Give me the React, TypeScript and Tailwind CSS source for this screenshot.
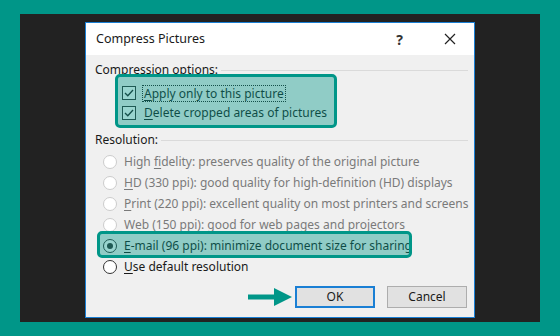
import React from "react";

const font = { fontFamily: '"Noto Sans", "Open Sans", sans-serif' };

function U({ c }: { c: string }) {
  return <span className="underline underline-offset-2">{c}</span>;
}

function Check() {
  return (
    <span className="flex h-[14px] w-[14px] items-center justify-center border border-[#333333] bg-white">
      <svg width="12" height="12" viewBox="0 0 12 12">
        <path d="M2 6 L4.8 8.8 L10 3" fill="none" stroke="#222" strokeWidth="1.3" />
      </svg>
    </span>
  );
}

function Radio({ on, disabled }: { on?: boolean; disabled?: boolean }) {
  return (
    <span
      className={
        "flex h-[14px] w-[14px] items-center justify-center rounded-full border bg-white " +
        (disabled ? "border-[#cccccc]" : "border-[#333333]")
      }
    >
      {on && <span className="h-[6px] w-[6px] rounded-full bg-[#333333]" />}
    </span>
  );
}

function RadioRow({
  children,
  on,
  disabled,
}: {
  children: React.ReactNode;
  on?: boolean;
  disabled?: boolean;
}) {
  return (
    <div className="flex h-[21px] items-center gap-[7px] pl-[17px]">
      <Radio on={on} disabled={disabled} />
      <span className={disabled ? "text-[#7a7a7a]" : "text-[#1a1a1a]"}>{children}</span>
    </div>
  );
}

export default function App() {
  return (
    <div className="h-[336px] w-[560px] bg-[#009688] px-[20px] pt-[14px]" style={font}>
      <div className="h-[308px] bg-[#222222] pl-[65px] pt-[8px]">
        <div className="flex h-[296px] w-[390px] flex-col border border-[#1a7fd4] bg-[#f0f0f0] text-[12px] text-[#1a1a1a]">
          <div className="flex h-[32px] items-center bg-white pl-[10px]">
            <span className="text-[12.5px] text-[#1a1a1a]">Compress Pictures</span>
            <span className="ml-auto mr-[41px] text-[14px] font-bold text-[#333]">?</span>
            <svg width="12" height="12" viewBox="0 0 12 12" className="mr-[18px]">
              <path d="M1 1 L11 11 M11 1 L1 11" stroke="#222" strokeWidth="1.2" />
            </svg>
          </div>

          <div className="relative flex flex-1 flex-col pt-[7px]">
            <div className="flex h-[16px] items-center pl-[9px] pr-[6px]">
              <span>Compression options:</span>
              <span className="ml-[3px] h-px flex-1 bg-[#dadada]" />
            </div>

            <div className="relative ml-[29px] mt-[-4px] w-[222px] pb-[5px] pl-[7px] pt-[9px]">
              <div className="flex h-[20px] items-center gap-[6px]">
                <Check />
                <span className="border border-dotted border-[#222] px-[1px] leading-[15px]">
                  <U c="A" />pply only to this picture
                </span>
              </div>
              <div className="flex h-[20px] items-center gap-[7px]">
                <Check />
                <span className="pl-[1px]">
                  <U c="D" />elete cropped areas of pictures
                </span>
              </div>
              <div className="absolute inset-0 rounded-[5px] border-[3px] border-[#009688] bg-[#009688]/40" />
            </div>

            <div className="mt-[4px] flex h-[16px] items-center pl-[9px] pr-[6px]">
              <span>Resolution:</span>
              <span className="ml-[3px] h-px flex-1 bg-[#dadada]" />
            </div>

            <div className="mt-[3px]">
              <RadioRow disabled>
                High <U c="f" />idelity: preserves quality of the original picture
              </RadioRow>
              <RadioRow disabled>
                <U c="H" />D (330 ppi): good quality for high-definition (HD) displays
              </RadioRow>
              <RadioRow disabled>
                <U c="P" />rint (220 ppi): excellent quality on most printers and screens
              </RadioRow>
              <RadioRow disabled>
                <U c="W" />eb (150 ppi): good for web pages and projectors
              </RadioRow>
              <div className="relative">
                <RadioRow on>
                  <U c="E" />-mail (96 ppi): minimize document size for sharing
                </RadioRow>
                <div className="absolute left-[11px] top-[-4px] h-[27px] w-[315px] rounded-[5px] border-[3px] border-[#009688] bg-[#009688]/40" />
              </div>
              <RadioRow>
                <U c="U" />se default resolution
              </RadioRow>
            </div>

            <div className="mt-auto flex items-center justify-end gap-[12px] pb-[9px] pr-[7px]">
              <svg width="44" height="18" viewBox="0 0 44 18" className="mr-[-9px]">
                <path d="M0 6.5 H26 V0 L44 9 L26 18 V11.5 H0 Z" fill="#009688" />
              </svg>
              <button className="flex h-[22px] w-[80px] items-center justify-center border-2 border-[#1a7fd4] bg-[#e1e1e1] text-[12px] text-[#1a1a1a]">
                OK
              </button>
              <button className="flex h-[22px] w-[80px] items-center justify-center border border-[#adadad] bg-[#e1e1e1] text-[12px] text-[#1a1a1a]">
                Cancel
              </button>
            </div>
          </div>
        </div>
      </div>
    </div>
  );
}
